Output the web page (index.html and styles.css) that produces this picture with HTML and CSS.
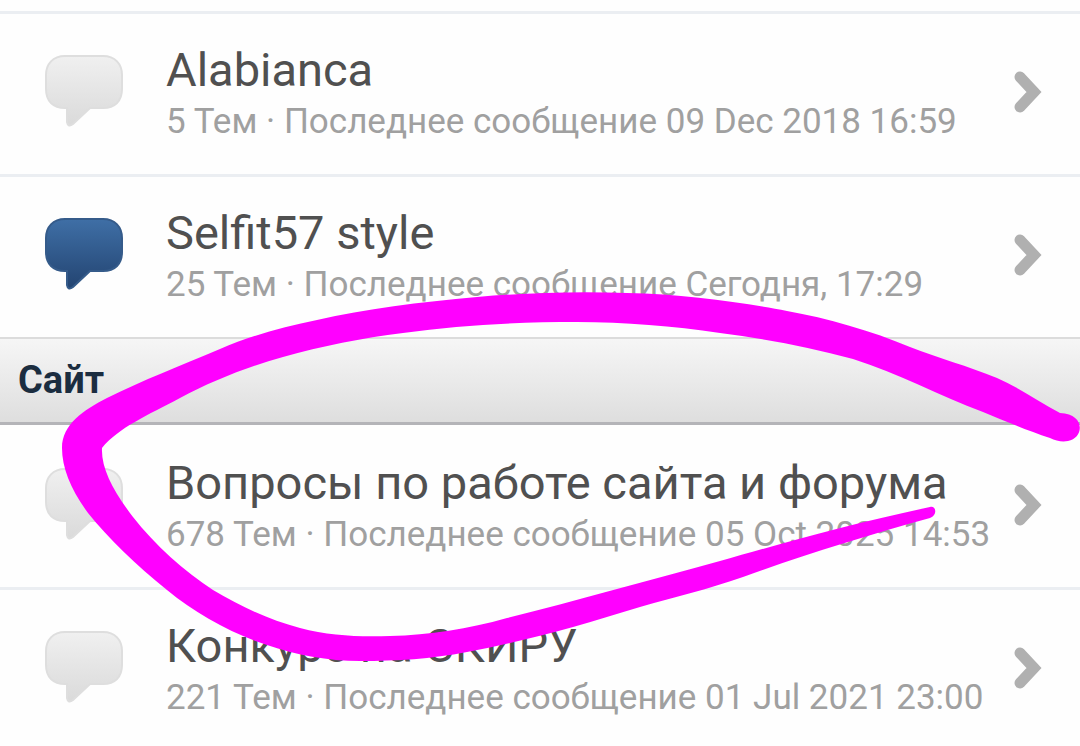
FILE: index.html
```html
<!DOCTYPE html>
<html lang="ru">
<head>
<meta charset="utf-8">
<meta name="viewport" content="width=device-width, initial-scale=1">
<title>Форум</title>
<link rel="stylesheet" href="styles.css">
</head>
<body>
<svg class="defs" aria-hidden="true">
  <defs>
    <linearGradient id="read" x1="0" y1="0" x2="0" y2="1">
      <stop offset="0" stop-color="#f0f0f0"/>
      <stop offset="1" stop-color="#dadada"/>
    </linearGradient>
    <linearGradient id="unread" x1="0" y1="0" x2="0" y2="1">
      <stop offset="0" stop-color="#3f6fa6"/>
      <stop offset="1" stop-color="#234471"/>
    </linearGradient>
    <symbol id="bubble" viewBox="0 0 78 72">
      <path d="M20 1H58C70 1 77 9 77 20V34C77 46 70 53 58 53H45L28 69Q23 73 22 67V53H20C8 53 1 46 1 34V20C1 9 8 1 20 1Z"/>
    </symbol>
    <symbol id="chevron" viewBox="0 0 28 44">
      <path d="M6 7L20 22L6 37" fill="none" stroke="#b0b0b0" stroke-width="11" stroke-linecap="round"/>
    </symbol>
  </defs>
</svg>
<main class="board">
  <ul class="forums forums-top">
    <li><a class="forum" href="#">
      <svg class="bubble"><use href="#bubble"/></svg>
      <span class="text"><span class="title">Alabianca</span><span class="meta">5 Тем · Последнее сообщение 09 Dec 2018 16:59</span></span>
      <svg class="chevron"><use href="#chevron"/></svg>
    </a></li>
    <li><a class="forum" href="#">
      <svg class="bubble unread"><use href="#bubble"/></svg>
      <span class="text"><span class="title">Selfit57 style</span><span class="meta">25 Тем · Последнее сообщение Сегодня, 17:29</span></span>
      <svg class="chevron"><use href="#chevron"/></svg>
    </a></li>
  </ul>
  <h2 class="category">Сайт</h2>
  <ul class="forums forums-site">
    <li><a class="forum" href="#">
      <svg class="bubble"><use href="#bubble"/></svg>
      <span class="text"><span class="title">Вопросы по работе сайта и форума</span><span class="meta">678 Тем · Последнее сообщение 05 Oct 2025 14:53</span></span>
      <svg class="chevron"><use href="#chevron"/></svg>
    </a></li>
    <li><a class="forum" href="#">
      <svg class="bubble"><use href="#bubble"/></svg>
      <span class="text"><span class="title">Конкурс на СКИРУ</span><span class="meta">221 Тем · Последнее сообщение 01 Jul 2021 23:00</span></span>
      <svg class="chevron"><use href="#chevron"/></svg>
    </a></li>
  </ul>
  <svg class="marker" viewBox="0 0 1080 746" aria-hidden="true">
    <path d="M1060 413C1038 401 1018 387 997 378C968 366 938 358 910 347C872 331 827 318 787 311C745 303 685 294 627 293C575 291 525 293 477 297C420 302 365 309 317 320C283 327 250 336 220 349C180 366 143 380 107 398C84 410 62 424 62 448C62 468 71 490 88 513C108 538 136 565 167 590C195 613 230 633 267 645C296 655 328 661 360 661C397 661 431 659 467 652C526 641 582 625 640 607C675 597 709 589 743 577C800 556 865 536 930 518C938 515 936 505 930 507C850 524 780 544 720 561C650 580 575 601 507 618C468 629 430 635 390 636C360 637 330 636 300 628C269 620 240 606 213 590C184 571 155 545 133 517C113 491 101 468 102 448C118 428 148 415 180 398C212 381 247 367 283 357C322 346 362 338 403 333C460 325 518 322 577 322C625 322 673 326 720 333C765 339 809 347 853 359C898 373 940 396 983 412C1005 421 1028 431 1050 438C1056 441 1062 442 1068 441C1084 438 1086 414 1060 413Z"/>
  </svg>
</main>
</body>
</html>
```
FILE: styles.css
```css
* {
  box-sizing: border-box;
}

body {
  margin: 0;
  background: #fefefe;
  color: #505050;
  font-family: Roboto, "Noto Sans", sans-serif;
}

.defs {
  position: absolute;
  width: 0;
  height: 0;
}

.board {
  position: relative;
  overflow: hidden;
}

.forums {
  margin: 0;
  padding: 0;
  list-style: none;
}

.forums-top {
  padding-top: 11px;
}

.forums-site {
  padding-top: 2px;
}

.forums-top li,
.forums li + li {
  border-top: 3px solid #ebeef2;
}

.forum {
  display: flex;
  align-items: flex-start;
  padding: 28px 38px 28px 45px;
  color: inherit;
  text-decoration: none;
}

.bubble {
  flex: none;
  width: 78px;
  height: 72px;
  margin: 13px 43px 0 0;
  fill: url(#read);
  stroke: #dedede;
  stroke-width: 2px;
}

.bubble.unread {
  fill: url(#unread);
  stroke: #355b8a;
}

.text {
  flex: 1;
  min-width: 0;
  white-space: nowrap;
}

.title,
.meta {
  display: block;
}

.title {
  font-size: 47px;
  line-height: 56px;
}

.meta {
  color: #a0a0a0;
  font-size: 35px;
  line-height: 48px;
}

.chevron {
  flex: none;
  width: 28px;
  height: 44px;
  margin-top: 28px;
}

.category {
  margin: 0;
  padding: 19px 18px 20px;
  border-top: 2px solid #dcdcdc;
  border-bottom: 3px solid #b4b4b8;
  background: linear-gradient(#f6f6f6, #dedede);
  color: #1b2d40;
  font-size: 38px;
  font-weight: 700;
  line-height: 44px;
}

.marker {
  position: absolute;
  top: 0;
  left: 0;
  width: 100%;
  fill: #ff00ff;
  pointer-events: none;
}
```
